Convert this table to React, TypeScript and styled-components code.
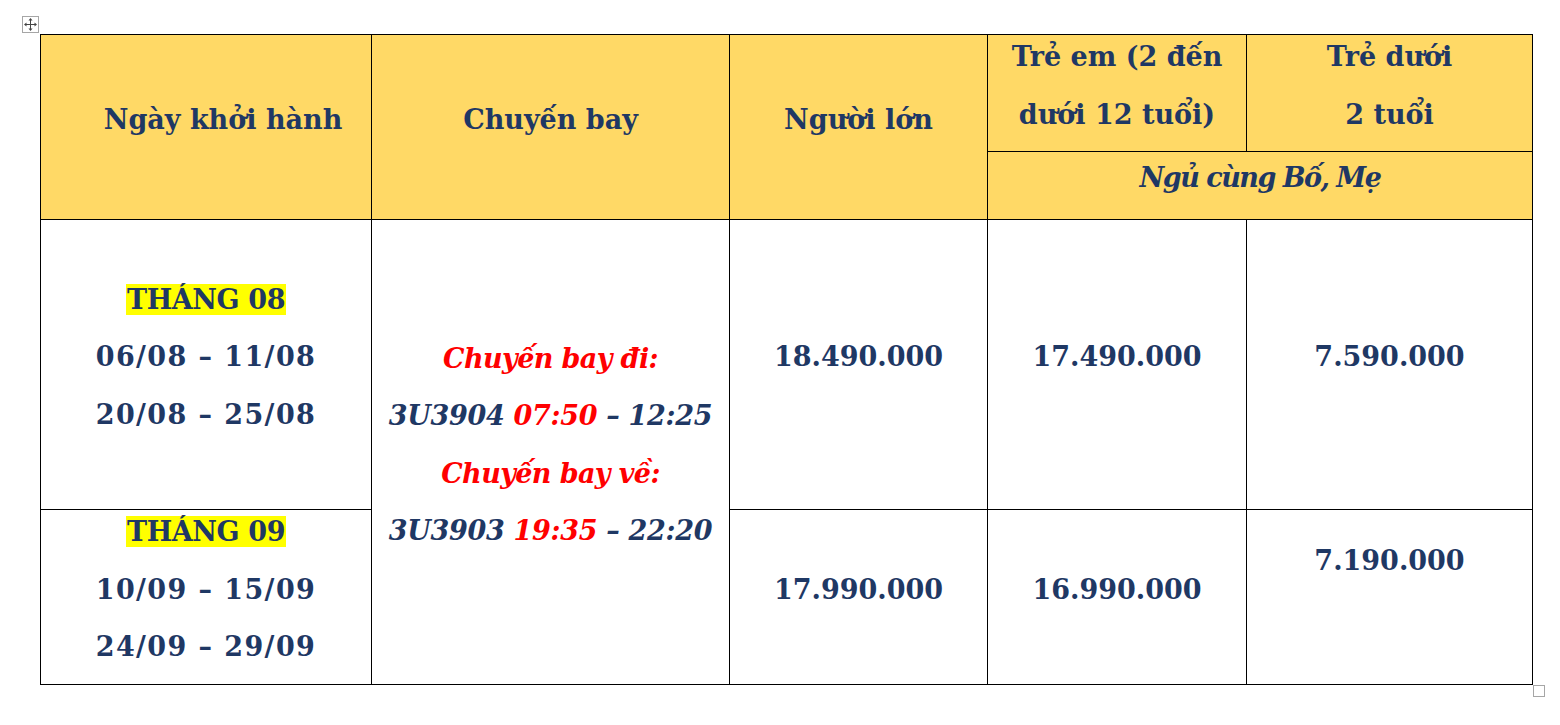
import React from 'react';
import styled, { createGlobalStyle } from 'styled-components';

const GlobalStyle = createGlobalStyle`
	html, body {
		margin: 0;
		padding: 0;
		background: #ffffff;
	}
`;

const Page = styled.div`
	padding: 34px 0 0 40px;
	width: 1560px;
	height: 725px;
	box-sizing: border-box;
`;

const TableWrap = styled.div`
	position: relative;
	width: 1493px;
`;

const Table = styled.div`
	display: grid;
	grid-template-columns: 330px 357px 257px 258px 285px;
	grid-template-rows: 116px 67px 289px 174px;
	gap: 1px;
	padding: 1px;
	background: #000000;
	font-family: 'DejaVu Serif', 'Liberation Serif', serif;
	font-weight: bold;
	font-size: 27px;
	color: #1f3864;
`;

const Cell = styled.div<{ $head?: boolean; $col: string; $row: string; $indent?: number }>`
	grid-column: ${(p) => p.$col};
	grid-row: ${(p) => p.$row};
	background: ${(p) => (p.$head ? '#ffd966' : '#ffffff')};
	display: flex;
	flex-direction: column;
	justify-content: center;
	align-items: center;
	text-align: center;
	line-height: 57.5px;
	padding-bottom: 15px;
	padding-left: ${(p) => p.$indent || 0}px;
	box-sizing: border-box;
	white-space: nowrap;
`;

const Line = styled.div<{ $italic?: boolean; $red?: boolean; $spacing?: number }>`
	font-style: ${(p) => (p.$italic ? 'italic' : 'normal')};
	color: ${(p) => (p.$red ? '#ff0000' : 'inherit')};
	letter-spacing: ${(p) => p.$spacing || 0}px;
	min-height: 57.5px;
`;

const Month = styled.span`
	background: #ffff00;
	padding: 0 1px;
	letter-spacing: -0.4px;
`;

const Red = styled.span`
	color: #ff0000;
`;

const MoveHandle = styled.div`
	position: absolute;
	left: -18px;
	top: -18px;
	width: 15px;
	height: 15px;
	border: 1px solid #a6a6a6;
	background: #ffffff;
	display: flex;
	align-items: center;
	justify-content: center;
`;

const ResizeHandle = styled.div`
	position: absolute;
	right: -12px;
	bottom: -12px;
	width: 10px;
	height: 10px;
	border: 1px solid #a6a6a6;
	background: #ffffff;
`;

export default function App() {
	return (
		<Page>
			<GlobalStyle />
			<TableWrap>
				<MoveHandle>
					<svg width="13" height="13" viewBox="0 0 13 13">
						<g stroke="#444" strokeWidth="1" fill="none">
							<line x1="6.5" y1="1" x2="6.5" y2="12" />
							<line x1="1" y1="6.5" x2="12" y2="6.5" />
						</g>
						<g fill="#444">
							<path d="M6.5 0 L8.5 2.5 L4.5 2.5 Z" />
							<path d="M6.5 13 L8.5 10.5 L4.5 10.5 Z" />
							<path d="M0 6.5 L2.5 4.5 L2.5 8.5 Z" />
							<path d="M13 6.5 L10.5 4.5 L10.5 8.5 Z" />
						</g>
					</svg>
				</MoveHandle>
				<Table>
					<Cell $head $col="1" $row="1 / 3" $indent={34}>
						<Line>Ngày khởi hành</Line>
					</Cell>
					<Cell $head $col="2" $row="1 / 3">
						<Line>Chuyến bay</Line>
					</Cell>
					<Cell $head $col="3" $row="1 / 3">
						<Line>Người lớn</Line>
					</Cell>
					<Cell $head $col="4" $row="1">
						<Line>Trẻ em (2 đến</Line>
						<Line>dưới 12 tuổi)</Line>
					</Cell>
					<Cell $head $col="5" $row="1">
						<Line>Trẻ dưới</Line>
						<Line>2 tuổi</Line>
					</Cell>
					<Cell $head $col="4 / 6" $row="2">
						<Line $italic $spacing={-1.5}>
							Ngủ cùng Bố, Mẹ
						</Line>
					</Cell>

					<Cell $col="1" $row="3">
						<Line>
							<Month>THÁNG 08</Month>
						</Line>
						<Line $spacing={1.4}>06/08 – 11/08</Line>
						<Line $spacing={1.4}>20/08 – 25/08</Line>
					</Cell>
					<Cell $col="2" $row="3 / 5">
						<Line $italic $red $spacing={-0.6}>
							Chuyến bay đi:
						</Line>
						<Line $italic $spacing={-0.3}>
							3U3904 <Red>07:50</Red> – 12:25
						</Line>
						<Line $italic $red $spacing={-0.6}>
							Chuyến bay về:
						</Line>
						<Line $italic $spacing={-0.3}>
							3U3903 <Red>19:35</Red> – 22:20
						</Line>
					</Cell>
					<Cell $col="3" $row="3">
						<Line>18.490.000</Line>
					</Cell>
					<Cell $col="4" $row="3">
						<Line>17.490.000</Line>
					</Cell>
					<Cell $col="5" $row="3">
						<Line>7.590.000</Line>
					</Cell>

					<Cell $col="1" $row="4">
						<Line>
							<Month>THÁNG 09</Month>
						</Line>
						<Line $spacing={1.4}>10/09 – 15/09</Line>
						<Line $spacing={1.4}>24/09 – 29/09</Line>
					</Cell>
					<Cell $col="3" $row="4">
						<Line>17.990.000</Line>
					</Cell>
					<Cell $col="4" $row="4">
						<Line>16.990.000</Line>
					</Cell>
					<Cell $col="5" $row="4">
						<Line>7.190.000</Line>
						<Line />
					</Cell>
				</Table>
				<ResizeHandle />
			</TableWrap>
		</Page>
	);
}
